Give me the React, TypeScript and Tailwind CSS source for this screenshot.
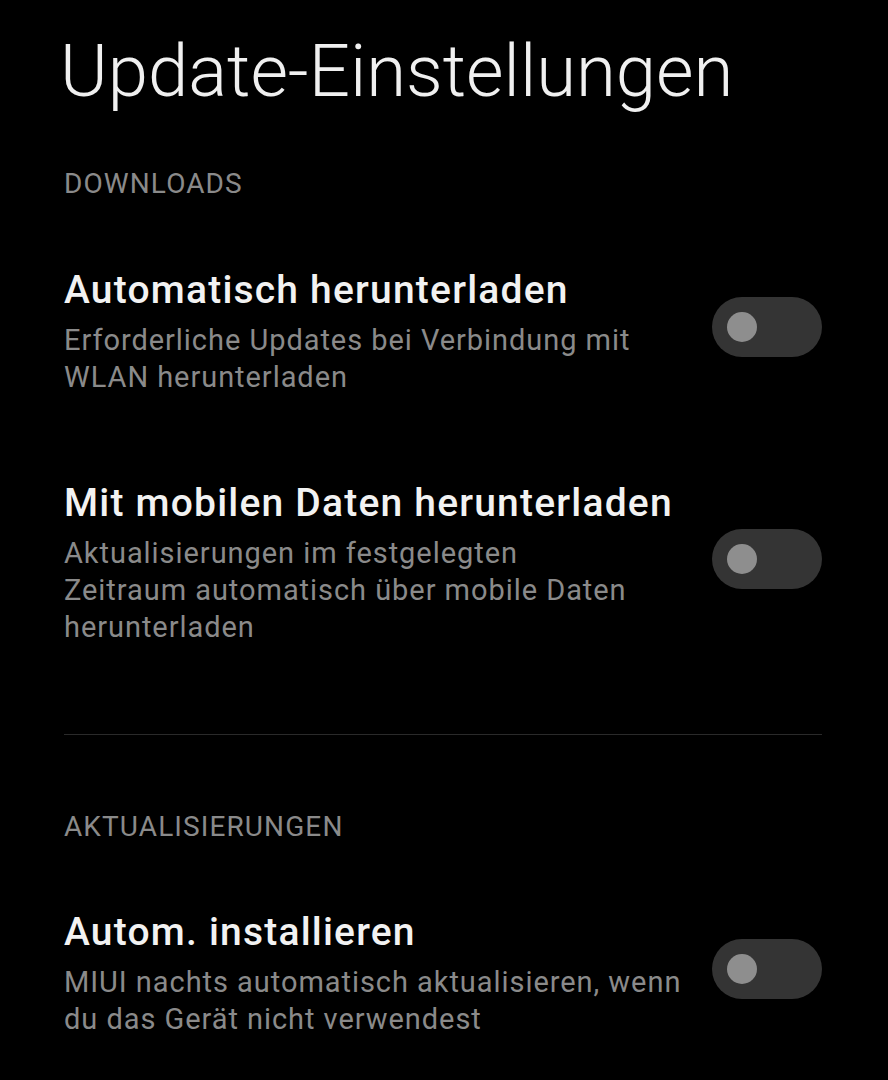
import React from 'react'

type Setting = {
  title: string
  lines: string[]
}

const DOWNLOADS: Setting[] = [
  {
    title: 'Automatisch herunterladen',
    lines: ['Erforderliche Updates bei Verbindung mit', 'WLAN herunterladen'],
  },
  {
    title: 'Mit mobilen Daten herunterladen',
    lines: ['Aktualisierungen im festgelegten', 'Zeitraum automatisch über mobile Daten', 'herunterladen'],
  },
]

const UPDATES: Setting[] = [
  {
    title: 'Autom. installieren',
    lines: ['MIUI nachts automatisch aktualisieren, wenn', 'du das Gerät nicht verwendest'],
  },
]

const Toggle = () => (
  <div className="mb-[10px] flex h-[60px] w-[110px] shrink-0 items-center rounded-full bg-[#343434] pl-[15px]">
    <div className="h-[30px] w-[30px] rounded-full bg-[#8e8e8e]" />
  </div>
)

const SettingRow = ({ title, lines }: Setting) => (
  <div className="flex items-center justify-between gap-6">
    <div className="flex flex-col whitespace-nowrap">
      <div className="text-[39px] font-medium leading-[44px] tracking-[1.2px] text-[#f2f2f2]">{title}</div>
      <div className="mt-[10px] text-[29px] leading-[37px] tracking-[0.95px] text-[#8a8a8a]">
        {lines.map((line) => (
          <div key={line}>{line}</div>
        ))}
      </div>
    </div>
    <Toggle />
  </div>
)

const SectionHeader = ({ children }: { children: React.ReactNode }) => (
  <div className="text-[28px] leading-[32px] tracking-[1.1px] text-[#8a8a8a]">{children}</div>
)

const App = () => {
  return (
    <main className="min-h-[1080px] w-[888px] overflow-hidden bg-black pl-[64px] pr-[66px] pt-[32px] font-['Roboto',sans-serif]">
      <h1 className="-ml-[4px] text-[72.5px] font-light leading-[80px] text-[#f0f0f0]">Update-Einstellungen</h1>

      <div className="mt-[56px]">
        <SectionHeader>DOWNLOADS</SectionHeader>
      </div>

      <div className="mt-[68px] flex flex-col gap-[85px]">
        {DOWNLOADS.map((s) => (
          <SettingRow key={s.title} {...s} />
        ))}
      </div>

      <div className="mt-[88px] h-px bg-[#2a2a2a]" />

      <div className="mt-[76px]">
        <SectionHeader>AKTUALISIERUNGEN</SectionHeader>
      </div>

      <div className="mt-[67px] flex flex-col">
        {UPDATES.map((s) => (
          <SettingRow key={s.title} {...s} />
        ))}
      </div>
    </main>
  )
}

export default App
